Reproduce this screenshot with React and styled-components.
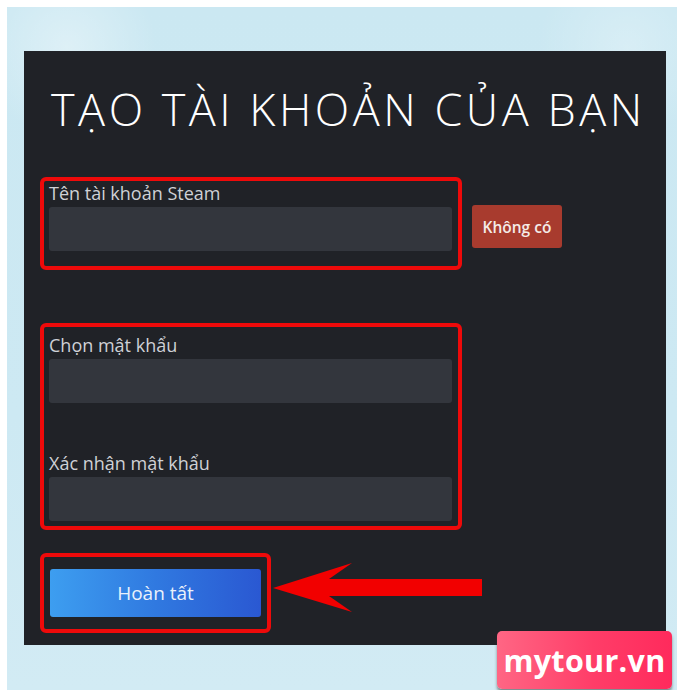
import React from "react";
import styled, { createGlobalStyle } from "styled-components";

const GlobalStyle = createGlobalStyle`
  body {
    margin: 0;
    background: #ffffff;
    font-family: "Open Sans", "Noto Sans", sans-serif;
  }
`;

const Frame = styled.div`
  position: relative;
  margin: 7px 0 0 7px;
  width: 670px;
  height: 683px;
  box-sizing: border-box;
  padding: 44px 11px 0 17px;
  background:
    radial-gradient(circle at 60px 40px, rgba(255, 255, 255, 0.35), transparent 90px),
    radial-gradient(circle at 620px 40px, rgba(255, 255, 255, 0.25), transparent 90px),
    linear-gradient(180deg, #cbe8f2 0%, #cde9f3 60%, #d2ebf4 100%);
`;

const Panel = styled.div`
  width: 642px;
  height: 594px;
  box-sizing: border-box;
  background: #202227;
  padding: 0 0 0 16px;
  display: flex;
  flex-direction: column;
`;

const Title = styled.h1`
  margin: 30px 0 0 11px;
  font-family: "Open Sans", sans-serif;
  font-weight: 300;
  font-size: 45px;
  line-height: 56px;
  letter-spacing: 3.5px;
  color: #ffffff;
  white-space: nowrap;
`;

const Row = styled.div`
  display: flex;
  align-items: flex-start;
  gap: ${(p) => p.$gap ?? 10}px;
  margin-top: ${(p) => p.$top || 0}px;
`;

// red annotation frame around a group of fields
const Highlight = styled.div`
  width: ${(p) => p.$w}px;
  box-sizing: border-box;
  border: 4px solid #ee0a0a;
  border-radius: 6px;
  padding: ${(p) => p.$pad};
  display: flex;
  flex-direction: column;
`;

const Label = styled.div`
  font-family: "Open Sans", sans-serif;
  font-size: 18px;
  line-height: 22px;
  color: #cfd1d6;
  margin-top: ${(p) => p.$top || 0}px;
`;

const Input = styled.div`
  height: 44px;
  margin-top: 3px;
  background: #33363d;
  border-radius: 3px;
`;

const SecondaryButton = styled.button`
  margin-top: 28px;
  width: 90px;
  height: 43px;
  border: none;
  border-radius: 3px;
  background: #a83b2e;
  color: #f4ece8;
  font-family: "Open Sans", sans-serif;
  font-weight: 600;
  font-size: 15.5px;
  padding: 0;
`;

const PrimaryButton = styled.button`
  width: 211px;
  height: 48px;
  border: none;
  border-radius: 3px;
  background: linear-gradient(90deg, #3d9ef0 0%, #3079e0 50%, #2a58d2 100%);
  color: #eaf1fb;
  font-family: "Open Sans", sans-serif;
  font-size: 19px;
  padding: 0;
`;

const Logo = styled.div`
  position: absolute;
  right: 5px;
  bottom: 1px;
  width: 175px;
  height: 58px;
  border-radius: 5px;
  background: linear-gradient(90deg, #ff6684 0%, #ff3d68 55%, #ff2a5c 100%);
  box-shadow: 0 3px 3px rgba(60, 60, 60, 0.55);
  display: flex;
  align-items: center;
  justify-content: center;
  color: #ffffff;
  font-family: "Open Sans", sans-serif;
  font-weight: 700;
  font-size: 30.5px;
  letter-spacing: 0.3px;
`;

const Arrow = () => (
  <svg width="212" height="52" viewBox="0 0 212 52" style={{ marginTop: 9 }}>
    <polygon
      fill="#f20000"
      points="0,26 79,1 56,17 209,17 209,34 56,34 79,50"
    />
  </svg>
);

export default function App() {
  return (
    <>
      <GlobalStyle />
      <Frame>
        <Panel>
          <Title>TẠO TÀI KHOẢN CỦA BẠN</Title>
          <Row $top={40}>
            <Highlight $w={422} $pad="1px 6px 15px 5px">
              <Label>Tên tài khoản Steam</Label>
              <Input />
            </Highlight>
            <SecondaryButton>Không có</SecondaryButton>
          </Row>
          <Row $top={53}>
            <Highlight $w={422} $pad="7px 6px 5px 5px">
              <Label>Chọn mật khẩu</Label>
              <Input />
              <Label $top={49}>Xác nhận mật khẩu</Label>
              <Input />
            </Highlight>
          </Row>
          <Row $top={23} $gap={2}>
            <Highlight $w={231} $pad="12px 6px 12px 6px">
              <PrimaryButton>Hoàn tất</PrimaryButton>
            </Highlight>
            <Arrow />
          </Row>
        </Panel>
        <Logo>mytour.vn</Logo>
      </Frame>
    </>
  );
}
